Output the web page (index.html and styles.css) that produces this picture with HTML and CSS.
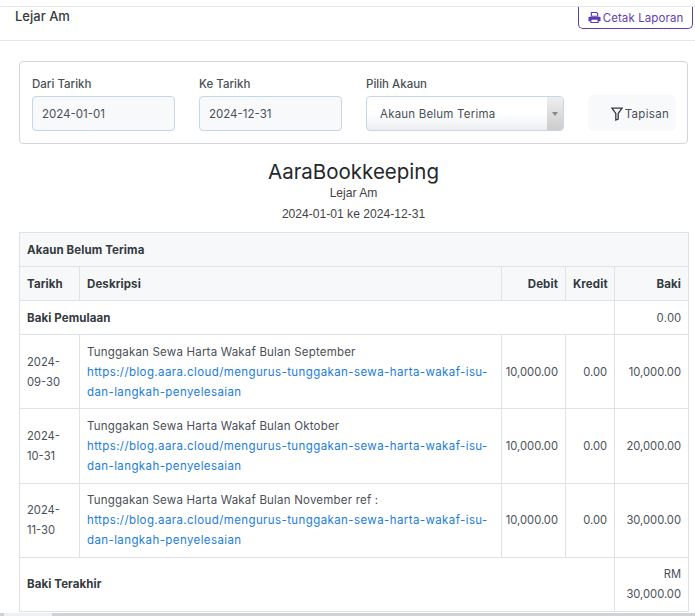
FILE: index.html
```html
<!DOCTYPE html>
<html lang="ms">
<head>
  <meta charset="UTF-8" />
  <title>Lejar Am</title>
  <link rel="stylesheet" href="styles.css">
</head>
<body>

<!-- Page header -->
<header class="page-head">
  <h4>Lejar Am</h4>
  <a class="print-btn">
    <svg class="print-icon" viewBox="0 0 14 14"><path d="M3 1h6.500L11 2.500V6H3zM4.200 2.200v2.800h5.600V3.100L9 2.200zM1.500 6.200h11c.6 0 1 .4 1 1V11h-2v2h-9v-2h-2V7.200c0-.6.4-1 1-1zM3.700 9.500v2.300h6.600V9.500z" fill-rule="evenodd"/></svg>
    Cetak Laporan
  </a>
</header>

<!-- Filter form -->
<form class="filter-card">
  <div class="field date-field">
    <label>Dari Tarikh</label>
    <input class="control" type="text" value="2024-01-01">
  </div>
  <div class="field date-field">
    <label>Ke Tarikh</label>
    <input class="control" type="text" value="2024-12-31">
  </div>
  <div class="field account-field">
    <label>Pilih Akaun</label>
    <div class="select-box">
      <span class="select-text">Akaun Belum Terima</span>
      <span class="select-arrow"></span>
    </div>
  </div>
  <button class="filter-btn" type="button">
    <svg class="filter-icon" viewBox="0 0 12 14"><path d="M1 1.200h10L7.200 6.400V12L4.800 13V6.400z"/></svg>
    Tapisan
  </button>
</form>

<!-- Report title -->
<div class="report-title">
  <h3>AaraBookkeeping</h3>
  <p>Lejar Am</p>
  <p class="report-range">2024-01-01 ke 2024-12-31</p>
</div>

<!-- Ledger -->
<table class="ledger">
  <colgroup>
    <col class="col-date"><col class="col-desc"><col class="col-debit"><col class="col-credit"><col class="col-balance">
  </colgroup>
  <thead>
    <tr><th colspan="5">Akaun Belum Terima</th></tr>
    <tr>
      <th>Tarikh</th>
      <th>Deskripsi</th>
      <th class="num">Debit</th>
      <th class="num">Kredit</th>
      <th class="num">Baki</th>
    </tr>
  </thead>
  <tbody>
    <tr>
      <td colspan="4" class="strong">Baki Pemulaan</td>
      <td class="num plain">0.00</td>
    </tr>
    <tr>
      <td class="date">2024-09-30</td>
      <td>Tunggakan Sewa Harta Wakaf Bulan September<br><a>https://blog.aara.cloud/mengurus-tunggakan-sewa-harta-wakaf-isu-dan-langkah-penyelesaian</a></td>
      <td class="num amount">10,000.00</td>
      <td class="num amount">0.00</td>
      <td class="num amount">10,000.00</td>
    </tr>
    <tr>
      <td class="date">2024-10-31</td>
      <td>Tunggakan Sewa Harta Wakaf Bulan Oktober<br><a>https://blog.aara.cloud/mengurus-tunggakan-sewa-harta-wakaf-isu-dan-langkah-penyelesaian</a></td>
      <td class="num amount">10,000.00</td>
      <td class="num amount">0.00</td>
      <td class="num amount">20,000.00</td>
    </tr>
    <tr>
      <td class="date">2024-11-30</td>
      <td>Tunggakan Sewa Harta Wakaf Bulan November ref :<br><a>https://blog.aara.cloud/mengurus-tunggakan-sewa-harta-wakaf-isu-dan-langkah-penyelesaian</a></td>
      <td class="num amount">10,000.00</td>
      <td class="num amount">0.00</td>
      <td class="num amount">30,000.00</td>
    </tr>
    <tr>
      <td colspan="4" class="strong">Baki Terakhir</td>
      <td class="num total">RM 30,000.00</td>
    </tr>
  </tbody>
</table>

<div class="h-scroll"><div class="h-thumb"></div></div>

</body>
</html>
```

FILE: styles.css
```css
body {
  font-family: 'Inter', 'Open Sans', sans-serif;
  margin: 0;
  background: white;
  color: #495057;
  font-size: 11.5px;
  height: 616px;
  overflow: hidden;
}

.page-head {
  margin-top: 6px;
  height: 33px;
  border-top: 1px solid #e4e6ea;
  border-bottom: 1px solid #e4e6ea;
  display: flex;
  justify-content: space-between;
  align-items: flex-start;
  padding: 0 2px 0 15px;
}

.page-head h4 {
  margin: 0;
  font-size: 13px;
  font-weight: 500;
  line-height: 18px;
  color: #343a40;
}

.print-btn {
  display: flex;
  align-items: center;
  gap: 2px;
  width: 115px;
  height: 22px;
  box-sizing: border-box;
  justify-content: center;
  border: 1px solid #5f3bb0;
  border-top: none;
  border-radius: 0 0 5px 5px;
  color: #6240b5;
  font-size: 11.5px;
  letter-spacing: 0.1px;
}

.print-icon {
  width: 13px;
  height: 13px;
  fill: #5f3bb0;
}

.filter-card {
  margin: 20px 7px 0 19px;
  height: 83px;
  box-sizing: border-box;
  border: 1px solid #d3d6da;
  border-radius: 4px;
  padding: 13px 10px 0 12px;
  display: flex;
  gap: 24px;
}

.field {
  display: flex;
  flex-direction: column;
}

.field label {
  font-size: 11.5px;
  font-weight: 500;
  line-height: 18px;
  margin-bottom: 3px;
}

.date-field {
  width: 143px;
}

.account-field {
  width: 198px;
}

.control {
  box-sizing: border-box;
  width: 100%;
  height: 35px;
  border: 1px solid #c5d6e6;
  border-radius: 4px;
  background: #f8f9fb;
  padding: 0 9px;
  font-family: inherit;
  font-size: 11.5px;
  color: #495057;
}

.select-box {
  box-sizing: border-box;
  height: 35px;
  border: 1px solid #c5d6e6;
  border-radius: 4px;
  background: linear-gradient(#ffffff 50%, #eceef0);
  display: flex;
  align-items: center;
  justify-content: space-between;
  padding-left: 13px;
  overflow: hidden;
  letter-spacing: 0.2px;
}

.select-arrow {
  width: 16px;
  height: 100%;
  background: linear-gradient(#eeeeee, #cccccc);
  position: relative;
}

.select-arrow::after {
  content: "";
  position: absolute;
  left: 5px;
  top: 15px;
  border-left: 3px solid transparent;
  border-right: 3px solid transparent;
  border-top: 4px solid #888;
}

.filter-btn {
  align-self: flex-start;
  margin-top: 20px;
  width: 88px;
  height: 36px;
  border: none;
  border-radius: 6px;
  background: #f8f9fb;
  font-family: inherit;
  font-size: 11.5px;
  letter-spacing: 0.3px;
  color: #495057;
  display: flex;
  align-items: center;
  justify-content: flex-end;
  gap: 2px;
  padding: 1px 7px 0 0;
}

.filter-icon {
  width: 12px;
  height: 14px;
  fill: none;
  stroke: #343a40;
  stroke-width: 1.3;
}

.report-title {
  text-align: center;
  margin-top: 16px;
  padding-left: 12px;
  font-family: 'Liberation Sans', sans-serif;
  font-size: 12.1px;
  color: #444;
}

.report-title h3 {
  margin: 0;
  font-family: 'Inter', sans-serif;
  font-size: 20.5px;
  font-weight: 400;
  line-height: 24px;
  color: #24272b;
}

.report-title p {
  margin: 0;
  line-height: 18px;
}

.report-title .report-range {
  margin-top: 3px;
}

.ledger {
  margin: 9px 0 0 19px;
  width: 670px;
  table-layout: fixed;
  border-collapse: collapse;
  line-height: 20.07px;
  letter-spacing: 0.2px;
}

.col-date { width: 60px; }
.col-debit { width: 64px; }
.col-credit { width: 49px; }
.col-balance { width: 74px; }

.ledger th, .ledger td {
  border: 1px solid #dfe2e6;
  padding: 6.5px 7px;
  text-align: left;
  font-weight: 400;
}

.ledger th {
  background: #f6f8fa;
  font-weight: 700;
  color: #343a40;
  letter-spacing: 0.1px;
  white-space: nowrap;
}

.ledger td.strong {
  font-weight: 700;
  color: #343a40;
  letter-spacing: 0.1px;
}

.ledger .num {
  text-align: right;
}

.ledger td.date {
  letter-spacing: 0;
  font-size: 11.2px;
}

.ledger td.amount, .ledger td.total {
  padding-left: 2px;
  font-size: 11.2px;
  letter-spacing: 0;
}

.ledger td.total {
  padding-left: 7px;
}

.ledger td.plain {
  font-family: 'Liberation Sans', sans-serif;
  font-size: 12px;
}

.ledger a {
  color: #1a7ddb;
  letter-spacing: 0.4px;
}

.h-scroll {
  margin-top: 1px;
  height: 4px;
  padding-left: 4px;
  background: #d0d3d5;
}

.h-thumb {
  width: 48px;
  height: 4px;
  background: #eef0f1;
}
```
